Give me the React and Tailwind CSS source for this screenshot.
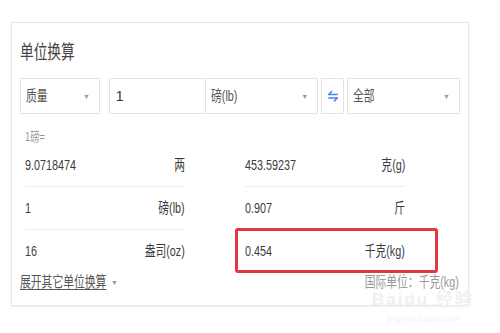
import { useState } from 'react'

const font = { fontFamily: '"Liberation Sans", "Noto Sans CJK SC", sans-serif' }

// the screenshot is squeezed sideways, so text is drawn narrow
const T = ({ children, right, className = '' }) => (
    <span className={`inline-block whitespace-nowrap scale-x-[0.72] ${right ? 'origin-right' : 'origin-left'} ${className}`}>
        {children}
    </span>
)

const Arrow = () => (
    <span className="text-[7px] text-[#999] leading-none">▼</span>
)

const SwapIcon = () => (
    <svg width="10" height="14" viewBox="0 0 10 14" fill="none" stroke="#3e86e8" strokeWidth="1.5" strokeLinecap="square">
        <path d="M1 5.5 H9" />
        <path d="M1 5.5 L3.5 2.5" />
        <path d="M1 9 H9" />
        <path d="M9 9 L6.5 12" />
    </svg>
)

// rows of the result table: [left value, left unit, right value, right unit]
const rows = [
    ['9.0718474', '两', '453.59237', '克(g)'],
    ['1', '磅(lb)', '0.907', '斤'],
    ['16', '盎司(oz)', '0.454', '千克(kg)'],
]

const App = () => {
    const [amount, setAmount] = useState('1')

    return (
        <div className="w-[500px] h-[333px] bg-white relative overflow-hidden pt-[22px] pl-[11px]" style={font}>
            <div className="w-[458px] h-[284px] border border-[#e6e6e6] shadow-[0_1px_2px_rgba(0,0,0,0.06)] px-[8px] pt-[18px] flex flex-col">
                <div className="text-[19px] leading-[24px] text-[#444]"><T>单位换算</T></div>

                <div className="flex items-center mt-[13px] h-[36px]">
                    <div className="w-[80px] h-full border border-[#e3e3e3] flex items-center justify-between pl-[5px] pr-[9px]">
                        <span className="text-[15px] text-[#555] w-[30px]"><T>质量</T></span>
                        <Arrow />
                    </div>
                    <div className="ml-[9px] w-[210px] h-full border border-[#e3e3e3] flex">
                        <input
                            className="w-[96px] h-full px-[6px] text-[14px] text-[#333] outline-none border-r border-[#e3e3e3]"
                            value={amount}
                            onChange={(e) => setAmount(e.target.value)}
                        />
                        <div className="flex-1 flex items-center justify-between pl-[5px] pr-[9px]">
                            <span className="text-[15px] text-[#555] w-[30px]"><T>磅(lb)</T></span>
                            <Arrow />
                        </div>
                    </div>
                    <div className="ml-[3px] w-[23px] h-full border border-[#e3e3e3] flex items-center justify-center">
                        <SwapIcon />
                    </div>
                    <div className="ml-[3px] w-[113px] h-full border border-[#e3e3e3] flex items-center justify-between pl-[5px] pr-[9px]">
                        <span className="text-[15px] text-[#555] w-[30px]"><T>全部</T></span>
                        <Arrow />
                    </div>
                </div>

                <div className="mt-[16px] pl-[5px] text-[13px] leading-[14px] text-[#999]"><T>1磅=</T></div>

                <div className="pl-[5px]">
                    {rows.map((r, i) => (
                        <div key={i} className="grid grid-cols-[160px_160px] gap-x-[60px]">
                            <div className={`flex items-center justify-between h-[43px] text-[15px] text-[#3c3c3c] ${i < 2 ? 'border-b border-[#eeeeee]' : ''}`}>
                                <T>{r[0]}</T>
                                <T right>{r[1]}</T>
                            </div>
                            <div className={`relative flex items-center justify-between h-[43px] text-[15px] text-[#3c3c3c] ${i < 2 ? 'border-b border-[#eeeeee]' : ''}`}>
                                <T>{r[2]}</T>
                                <T right>{r[3]}</T>
                                {i === 2 && (
                                    <div className="absolute left-[-10px] top-[-2px] w-[203px] h-[45px] border-[3px] border-[#e0383e] rounded-[3px]" />
                                )}
                            </div>
                        </div>
                    ))}
                </div>

                <div className="flex items-center justify-between mt-[1px] h-[16px] pr-[1px]">
                    <div className="flex items-center gap-[4px]">
                        <span className="w-[87px] text-[15px] text-[#555]"><T className="underline underline-offset-2">展开其它单位换算</T></span>
                        <Arrow />
                    </div>
                    <span className="text-[15px] text-[#999]"><T right>国际单位：千克(kg)</T></span>
                </div>
            </div>

            {/* faint watermark in the corner */}
            <div className="absolute left-[372px] top-[287px] flex flex-col items-center pointer-events-none">
                <span className="text-[17px] font-bold tracking-[2px] text-[#f0f0f0]">Baidu 经验</span>
                <span className="text-[9px] text-[#f2f2f2]">jingyan.baidu.com</span>
            </div>
        </div>
    );
}

export default App
